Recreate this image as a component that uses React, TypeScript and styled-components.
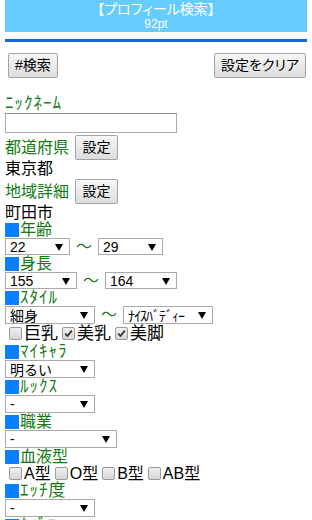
import React from "react";
import styled, { createGlobalStyle } from "styled-components";

const GlobalStyle = createGlobalStyle`
  html, body { padding: 0; background: #ffffff; }
  body {
    margin: 0 5px;
    font-family: "Liberation Sans", "Noto Sans CJK JP", sans-serif;
    color: #000000;
  }
  * { box-sizing: border-box; }
`;

const GREEN = "#157a15";
const BLUE = "#0a7fff";

const Header = styled.header`
  height: 32px;
  background: #66ccff;
  color: #ffffff;
  text-align: center;
  padding-top: 1px;
`;

const HeaderTitle = styled.div`
  font-size: 14px;
  line-height: 17px;
  font-feature-settings: "palt";
`;

const HeaderSub = styled.div`
  font-size: 12px;
  line-height: 13px;
`;

const Rule = styled.div`
  margin-top: 7px;
  height: 3px;
  background: #1566dc;
`;

const ButtonRow = styled.div`
  margin-top: 11px;
  padding: 0 1px 0 3px;
  display: flex;
  justify-content: space-between;
`;

const Button = styled.button`
  height: 25px;
  padding: 0 6px;
  margin: 0;
  border: 1px solid #a3a3a3;
  border-radius: 2px;
  background: linear-gradient(#f7f7f7, #dddddd);
  font-family: "Liberation Sans", "Noto Sans CJK JP", sans-serif;
  font-size: 14px;
  line-height: 23px;
  color: #000;
  font-feature-settings: "palt";
`;

const NickLabel = styled.div`
  margin-top: 17px;
  color: ${GREEN};
  font-size: 17px;
  line-height: 18px;
  letter-spacing: 1px;
`;

const TextInput = styled.input`
  display: block;
  width: 172px;
  height: 20px;
  margin: 0;
  border: 1px solid #a9a9a9;
  border-top-color: #8f8f8f;
  background: #fff;
`;

const SettingRow = styled.div`
  margin-top: 2px;
  height: 25px;
  display: flex;
  align-items: center;
  gap: 6px;
`;

const GreenText = styled.span`
  color: ${GREEN};
  font-size: 16px;
  line-height: 17px;
`;

const SmallButton = styled(Button)`
  width: 43px;
  padding: 0;
`;

const PlainText = styled.div`
  font-size: 16px;
  line-height: 17px;
`;

const SectionLabel = styled.div<{ $kana?: boolean }>`
  display: flex;
  align-items: center;
  height: 17px;
  color: ${GREEN};
  font-size: ${(p) => (p.$kana ? "17px" : "16px")};
  line-height: 17px;
  letter-spacing: ${(p) => (p.$kana ? "1px" : "0")};
`;

const Square = styled.span`
  display: inline-block;
  width: 14px;
  height: 14px;
  margin-right: 1px;
  background: ${BLUE};
`;

const SelectRow = styled.div`
  display: flex;
  align-items: center;
`;

const SelectBox = styled.div<{ $w: number; $h: number; $small?: boolean }>`
  width: ${(p) => p.$w}px;
  height: ${(p) => p.$h}px;
  border: 1px solid #a9a9a9;
  background: #fff;
  display: flex;
  align-items: center;
  justify-content: space-between;
  padding: 0 6px 0 4px;
  font-size: 14px;
  letter-spacing: ${(p) => (p.$small ? "-1px" : "0")};
  color: #000;
  white-space: nowrap;
`;

const Tilde = styled.span`
  color: ${GREEN};
  font-size: 16px;
  margin: 0 6px;
  line-height: 16px;
`;

const CheckRow = styled.div<{ $size: number; $h: number }>`
  display: flex;
  align-items: center;
  height: ${(p) => p.$h}px;
  font-size: ${(p) => p.$size}px;
`;

const CheckBox = styled.span`
  display: inline-flex;
  align-items: center;
  justify-content: center;
  width: 13px;
  height: 13px;
  margin: 0 2px 0 4px;
  border: 1px solid #9a9a9a;
  border-radius: 2px;
  background: linear-gradient(#f0f0f0, #d6d6d6);
`;

const CheckText = styled.span`
  line-height: 1;
`;

const Arrow = () => (
  <svg width="8" height="8" viewBox="0 0 8 8">
    <polygon points="0,1 8,1 4,8" fill="#000" />
  </svg>
);

const Select = ({ w, h = 18, value, small }: { w: number; h?: number; value: string; small?: boolean }) => (
  <SelectBox $w={w} $h={h} $small={small}>
    <span>{value}</span>
    <Arrow />
  </SelectBox>
);

const Check = ({ checked, label }: { checked?: boolean; label: string }) => (
  <>
    <CheckBox>
      {checked && (
        <svg width="9" height="9" viewBox="0 0 9 9">
          <path d="M1.2 4.6 L3.5 7 L7.8 1.6" stroke="#333" strokeWidth="1.8" fill="none" />
        </svg>
      )}
    </CheckBox>
    <CheckText>{label}</CheckText>
  </>
);

const Section = ({ label, kana }: { label: string; kana?: boolean }) => (
  <SectionLabel $kana={kana}>
    <Square />
    {label}
  </SectionLabel>
);

export default function App() {
  return (
    <>
      <GlobalStyle />
      <Header>
        <HeaderTitle>【プロフィール検索】</HeaderTitle>
        <HeaderSub>92pt</HeaderSub>
      </Header>
      <Rule />
      <ButtonRow>
        <Button>#検索</Button>
        <Button>設定をクリア</Button>
      </ButtonRow>
      <NickLabel>ﾆｯｸﾈｰﾑ</NickLabel>
      <TextInput type="text" />
      <SettingRow>
        <GreenText>都道府県</GreenText>
        <SmallButton>設定</SmallButton>
      </SettingRow>
      <PlainText>東京都</PlainText>
      <SettingRow>
        <GreenText>地域詳細</GreenText>
        <SmallButton>設定</SmallButton>
      </SettingRow>
      <PlainText>町田市</PlainText>

      <Section label="年齢" />
      <SelectRow>
        <Select w={65} h={17} value="22" />
        <Tilde>〜</Tilde>
        <Select w={65} h={17} value="29" />
      </SelectRow>

      <Section label="身長" />
      <SelectRow>
        <Select w={72} h={17} value="155" />
        <Tilde>〜</Tilde>
        <Select w={72} h={17} value="164" />
      </SelectRow>

      <Section label="ｽﾀｲﾙ" kana />
      <SelectRow>
        <Select w={90} value="細身" />
        <Tilde>〜</Tilde>
        <Select w={90} value="ﾅｲｽﾊﾞﾃﾞｨｰ" small />
      </SelectRow>
      <CheckRow $size={17} $h={19}>
        <Check label="巨乳" />
        <Check label="美乳" checked />
        <Check label="美脚" checked />
      </CheckRow>

      <Section label="ﾏｲｷｬﾗ" kana />
      <Select w={90} value="明るい" />

      <Section label="ﾙｯｸｽ" kana />
      <Select w={90} value="-" />

      <Section label="職業" />
      <Select w={112} value="-" />

      <Section label="血液型" />
      <CheckRow $size={16} $h={17}>
        <Check label="A型" />
        <Check label="O型" />
        <Check label="B型" />
        <Check label="AB型" />
      </CheckRow>

      <Section label="ｴｯﾁ度" kana />
      <Select w={90} value="-" />

      <Section label="ﾀﾊﾞｺ" kana />
      <Select w={90} value="-" />
    </>
  );
}
